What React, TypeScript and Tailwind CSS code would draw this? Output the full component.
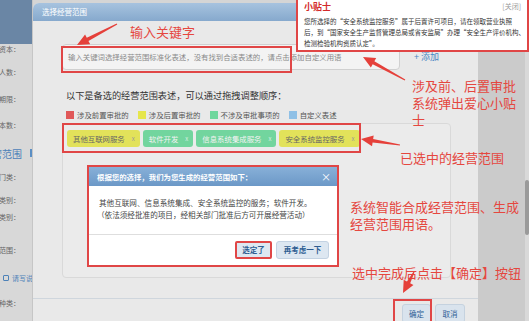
type Pt = [number, number]

// tapered arrow like the ones a screenshot tool draws
function arrowPoints(t: Pt, h: Pt, head = 12, hw = 5.5) {
  const dx = h[0] - t[0]
  const dy = h[1] - t[1]
  const len = Math.hypot(dx, dy)
  const ux = dx / len
  const uy = dy / len
  const nx = -uy
  const ny = ux
  const bx = h[0] - ux * head
  const by = h[1] - uy * head
  const pts: Pt[] = [
    [t[0] + nx * 0.6, t[1] + ny * 0.6],
    [bx + nx * 1.8, by + ny * 1.8],
    [bx + nx * hw, by + ny * hw],
    h,
    [bx - nx * hw, by - ny * hw],
    [bx - nx * 1.8, by - ny * 1.8],
    [t[0] - nx * 0.6, t[1] - ny * 0.6],
  ]
  return pts.map((p) => p.join(',')).join(' ')
}

const arrows: [Pt, Pt][] = [
  [[117, 24], [77, 45]],
  [[405, 80], [363, 57]],
  [[400, 145], [361, 139]],
  [[414, 272], [403, 293]],
]

const sideLabels = [
  { t: '注册资本：', mt: 'mt-0' },
  { t: '从业人数：', mt: 'mt-[13px]' },
  { t: '营业期限：', mt: 'mt-[17px]' },
  { t: '副本数：', mt: 'mt-[16px]' },
]
const sideLabels2 = [
  { t: '行业门类：', mt: 'mt-[12px]' },
  { t: '行业类别：', mt: 'mt-[13px]' },
  { t: '企业类别：', mt: 'mt-[7px]' },
  { t: '经营范围：', mt: 'mt-[23px]' },
]

const legend = [
  { color: 'bg-[#e05858]', label: '涉及前置审批的' },
  { color: 'bg-[#e6e64c]', label: '涉及后置审批的' },
  { color: 'bg-[#6fd79d]', label: '不涉及审批事项的' },
  { color: 'bg-[#8fc0e6]', label: '自定义表述' },
]

const tags = [
  { label: '其他互联网服务', yellow: true },
  { label: '软件开发', yellow: false },
  { label: '信息系统集成服务', yellow: false },
  { label: '安全系统监控服务', yellow: true },
]

function SideLabel({ text, mt }: { text: string; mt: string }) {
  return (
    <div className={`${mt} h-[10px] flex items-center justify-end overflow-hidden pr-[12px] whitespace-nowrap text-[7px] text-[#666]`}>
      {text}
    </div>
  )
}

export default function App() {
  return (
    <div className="relative w-[529px] h-[321px] overflow-hidden flex bg-[#d5d5d5] font-['Noto_Sans_CJK_SC',sans-serif]">
      {/* left form strip, mostly hidden behind the dialog */}
      <aside className="w-[33px] shrink-0 flex flex-col bg-[#d8d8d8] border-r border-[#c6c6c6]">
        <div className="h-[44px] bg-[#6a86a5]" />
        {sideLabels.map((l) => (
          <SideLabel key={l.t} text={l.t} mt={l.mt} />
        ))}
        <div className="mt-[16px] h-[14px] flex items-center justify-end overflow-hidden whitespace-nowrap">
          <span className="text-[10px] text-[#4d82b8]">经营范围</span>
          <span className="ml-[8px] w-[2px] h-[8px] bg-[#5b8fc4] shrink-0" />
        </div>
        {sideLabels2.map((l) => (
          <SideLabel key={l.t + l.mt} text={l.t} mt={l.mt} />
        ))}
        <div className="mt-[18px] h-[10px] flex items-center gap-[3px] pl-[3px] overflow-hidden whitespace-nowrap">
          <span className="w-[6px] h-[6px] shrink-0 border border-[#4d82b8] rounded-[1px]" />
          <span className="text-[7px] text-[#4d82b8]">请写说</span>
        </div>
        <SideLabel text="许可种类：" mt="mt-[15px]" />
      </aside>

      {/* main dialog */}
      <section className="w-[445px] h-[318px] mt-[3px] shrink-0 flex flex-col bg-[#e9e9e9] rounded-tl-[6px] overflow-hidden">
        <header className="h-[18px] shrink-0 flex items-center pl-[9px] bg-gradient-to-b from-[#a7c3df] to-[#86a9cd] text-white text-[7.5px]">
          选择经营范围
        </header>
        <div className="flex-1 pl-[29px] pt-[23px]">
          <div className="flex items-center h-[26px]">
            <div className="w-[338px] h-[26px] flex items-center pl-[5px] bg-[#f3f3f3] border border-[#d0d0d0] rounded-[4px] whitespace-nowrap text-[7.4px] text-[#8a8a8a]">
              输入关键词选择经营范围标准化表述，没有找到合适表述的，请点击添加自定义用语
            </div>
            <span className="ml-[14px] text-[9px] text-[#4a86c2]">+ 添加</span>
          </div>
          <p className="mt-[19px] pl-[4px] h-[12px] leading-[12px] text-[9.2px] text-[#333]">
            以下是备选的经营范围表述，可以通过拖拽调整顺序：
          </p>
          <div className="mt-[9px] h-[10px] pl-[4px] flex items-center gap-[9px]">
            {legend.map((l) => (
              <div key={l.label} className="flex items-center gap-[3px]">
                <span className={`w-[8px] h-[8px] ${l.color}`} />
                <span className="text-[7.4px] text-[#555] whitespace-nowrap">{l.label}</span>
              </div>
            ))}
          </div>
          <div className="mt-[3px] w-[389px] h-[155px] rounded-[4px] border border-[#d9d9d9] bg-[#ebebeb] pt-[6px] pl-[4px] flex items-start gap-[3px]">
            {tags.map((t) => (
              <div
                key={t.label}
                className={
                  t.yellow
                    ? 'h-[17px] flex items-center gap-[7px] pl-[6px] pr-[5px] rounded-[3px] bg-[#e2e25a] text-[#666] whitespace-nowrap'
                    : 'h-[17px] flex items-center gap-[7px] pl-[6px] pr-[5px] rounded-[3px] bg-[#72d59e] text-[#f2f2f2] whitespace-nowrap'
                }
              >
                <span className="text-[7.4px]">{t.label}</span>
                <span className={t.yellow ? 'text-[6px] text-[#999]' : 'text-[6px] text-[#d8efe2]'}>x</span>
              </div>
            ))}
          </div>
        </div>
        <footer className="h-[23px] shrink-0 border-t border-[#cfd6dd] flex justify-end gap-[4px] pr-[13px] pt-[5px]">
          <button className="w-[29px] h-[19px] rounded-[3px] bg-[#d9e3ed] border border-[#c5d2df] text-[7.5px] text-[#2f6096]">确定</button>
          <button className="w-[30px] h-[19px] rounded-[3px] bg-[#d9e3ed] border border-[#c5d2df] text-[7.5px] text-[#2f6096]">取消</button>
        </footer>
      </section>

      {/* right dimmed area + scrollbar */}
      <div className="flex-1 flex bg-[#cbcbcb]">
        <div className="flex-1" />
        <div className="w-[4px] bg-[#d9d9d9] flex flex-col">
          <div className="h-[180px]" />
          <div className="h-[55px] bg-[#9a9a9a] rounded-[2px]" />
        </div>
      </div>

      {/* tip popup */}
      <div className="absolute left-[296px] top-[-2px] w-[233px] h-[54px] bg-white border-2 border-[#e04646] px-[6px]">
        <div className="flex justify-between items-center h-[13px]">
          <span className="text-[9px] font-bold text-[#d32a2a]">小贴士</span>
          <span className="text-[7px] text-[#9a9a9a]">[关闭]</span>
        </div>
        <div className="mt-[3px] text-[6.5px] leading-[11px] text-[#333] whitespace-nowrap">
          <div>您所选择的“安全系统监控服务”属于后置许可项目，请在领取营业执照</div>
          <div>后，到“国家安全生产监督管理总局或省安监局”办理“安全生产评价机构、</div>
          <div>检测检验机构资质认定”。</div>
        </div>
      </div>

      {/* generated scope modal */}
      <div className="absolute left-[87px] top-[165px] w-[252px] h-[102px] border-2 border-[#e04646] bg-white flex flex-col">
        <div className="h-[19px] shrink-0 flex items-center justify-between pl-[8px] pr-[6px] bg-gradient-to-b from-[#88b0d8] to-[#6b98c7] text-white">
          <span className="text-[7.4px] font-bold">根据您的选择，我们为您生成的经营范围如下：</span>
          <span className="text-[10px] leading-none">×</span>
        </div>
        <div className="h-[49px] shrink-0 border-b border-[#dedede] pt-[11px] pl-[10px] text-[7.6px] leading-[12px] text-[#444] whitespace-nowrap">
          <div>其他互联网、信息系统集成、安全系统监控的服务；软件开发。</div>
          <div className="-ml-[2px]">（依法须经批准的项目，经相关部门批准后方可开展经营活动）</div>
        </div>
        <div className="flex justify-end gap-[4px] pr-[8px] pt-[6px]">
          <button className="w-[37px] h-[18px] rounded-[2px] bg-[#dde7f1] border-2 border-[#e04646] text-[7.5px] font-bold text-[#2d5d92]">选定了</button>
          <button className="w-[53px] h-[18px] rounded-[3px] bg-[#dde7f1] border border-[#c3d2e2] text-[7.5px] font-bold text-[#2d5d92]">再考虑一下</button>
        </div>
      </div>

      {/* red annotation boxes */}
      <div className="absolute left-[61px] top-[46px] w-[231px] h-[27px] border-2 border-[#e04646]" />
      <div className="absolute left-[62px] top-[123px] w-[299px] h-[30px] border-2 border-[#e04646]" />
      <div className="absolute left-[393px] top-[299px] w-[39px] h-[26px] border-2 border-[#e04646]" />

      {/* annotation texts */}
      <div className="absolute left-[130px] top-[24px] text-[13px] leading-[16px] text-[#e5473f] whitespace-nowrap">输入关键字</div>
      <div className="absolute left-[412px] top-[77px] text-[13px] leading-[17px] text-[#e5473f] whitespace-nowrap">
        <div>涉及前、后置审批</div>
        <div>系统弹出爱心小贴</div>
        <div>士</div>
      </div>
      <div className="absolute left-[400px] top-[150px] text-[13px] leading-[16px] text-[#e5473f] whitespace-nowrap">已选中的经营范围</div>
      <div className="absolute left-[350px] top-[198px] text-[13px] leading-[17px] text-[#e5473f] whitespace-nowrap">
        <div>系统智能合成经营范围、生成</div>
        <div>经营范围用语。</div>
      </div>
      <div className="absolute left-[352px] top-[265px] text-[13px] leading-[16px] text-[#e5473f] whitespace-nowrap">选中完成后点击【确定】按钮</div>

      <svg className="absolute inset-0 pointer-events-none" width="529" height="321" viewBox="0 0 529 321">
        {arrows.map(([t, h], i) => (
          <polygon key={i} points={arrowPoints(t, h)} fill="#e5403a" />
        ))}
      </svg>
    </div>
  )
}
